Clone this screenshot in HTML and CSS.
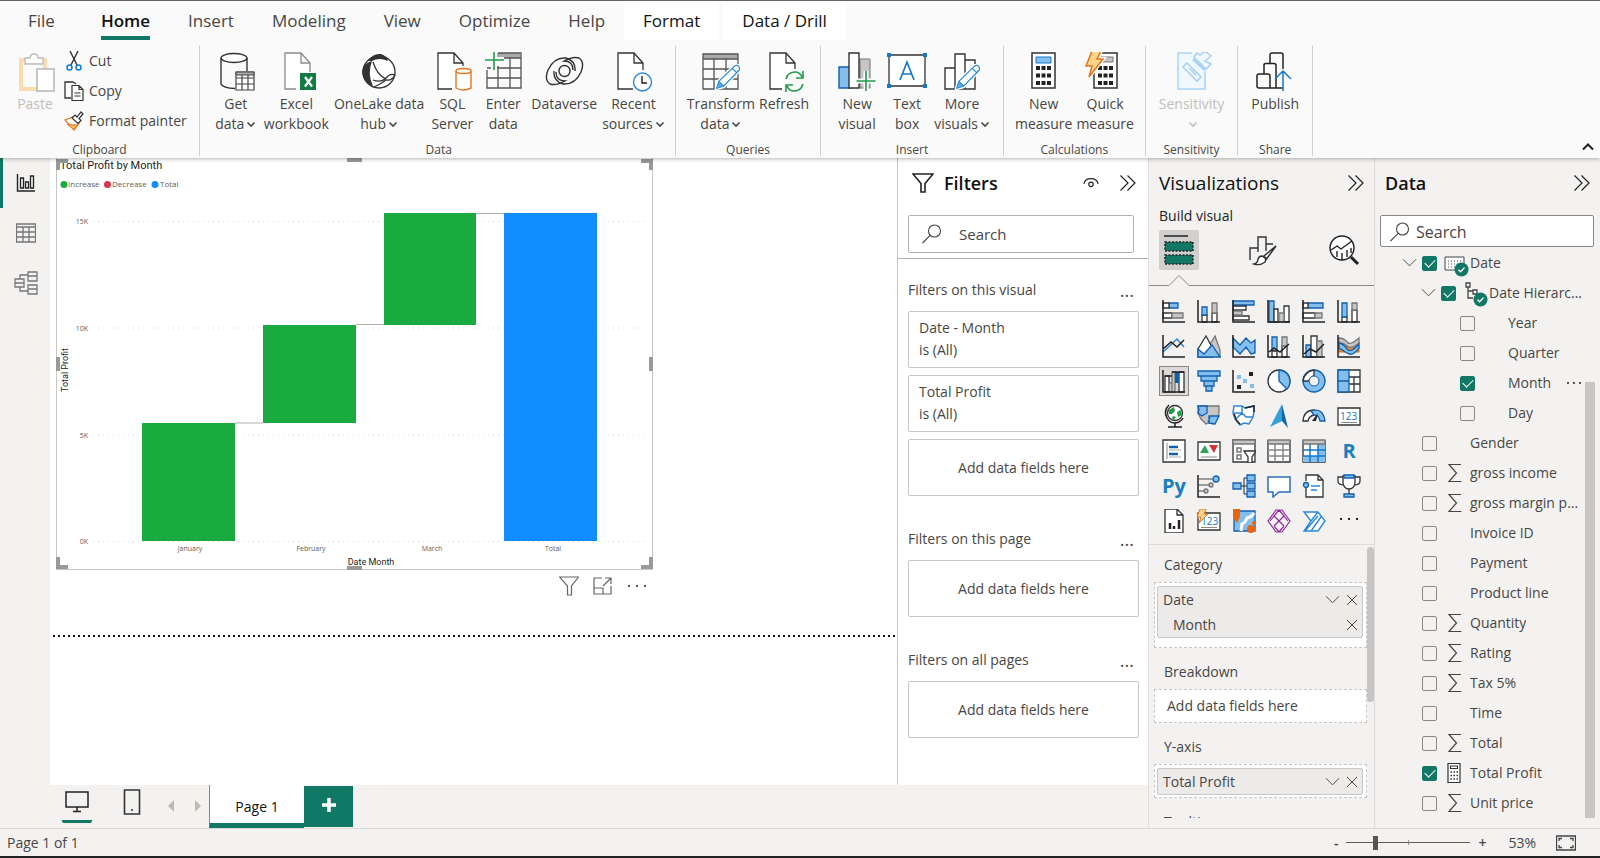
FILE: index.html
```html
<!DOCTYPE html>
<html lang="en">
<head>
    <meta charset="UTF-8">
    <meta name="viewport" content="width=device-width, initial-scale=1.0">
    <title>Report - Total Profit by Month</title>
    <link rel="stylesheet" href="styles.css">
</head>
<body>
    <!-- shared icons -->
    <svg class="sprite" aria-hidden="true">
        <symbol id="i-down" viewBox="0 0 10 10"><path d="M1.5 3.5L5 7l3.500-3.500" fill="none" stroke="currentColor" stroke-width="1.6"/></symbol>
        <symbol id="i-chev" viewBox="0 0 16 10"><path d="M1 1l7 7 7-7" fill="none" stroke="currentColor"/></symbol>
        <symbol id="i-close" viewBox="0 0 12 12"><path d="M1 1l10 10M11 1L1 11" fill="none" stroke="currentColor"/></symbol>
        <symbol id="i-collapse" viewBox="0 0 18 16"><path d="M1.500 0.500L9 8l-7.500 7.500M8.500 0.500L16 8l-7.500 7.500" fill="none" stroke="currentColor" stroke-width="1.2"/></symbol>
        <symbol id="i-search" viewBox="0 0 20 20"><circle cx="12.500" cy="7" r="6" fill="none" stroke="currentColor" stroke-width="1.1"/><path d="M8.200 11.300L0.500 19" fill="none" stroke="currentColor" stroke-width="1.1"/></symbol>
        <symbol id="i-sum" viewBox="0 0 20 20"><path d="M16 1.500H4L11.500 10 4 18.500h12.500" fill="none" stroke="currentColor" stroke-width="1.2"/></symbol>
        <symbol id="i-pencil" viewBox="0 0 28 28"><path d="M3 25l2-7L21 2.500q2.500-2 4.500 0t0 4.500L10 23z" fill="#fff" stroke="#fff" stroke-width="4"/><path d="M5 18L21 2.500q2.500-2 4.500 0t0 4.500L10 23zM19 4.500L23.500 9" fill="#fff" stroke="#2b88d8" stroke-width="1.300"/><path d="M5 18l-2.500 7.500L10 23z" fill="#5ba7e6" stroke="#2b88d8"/></symbol>
        <symbol id="i-done" viewBox="0 0 16 16"><circle cx="8" cy="8" r="7.500" fill="#117865"/><path d="M4.800 8.200l2.200 2.200 4.200-4.400" fill="none" stroke="#fff" stroke-width="1.500"/></symbol>
    </svg>

    <header class="ribbon">
        <nav class="tabs">
            <button class="file">File</button>
            <button class="active">Home</button>
            <button>Insert</button>
            <button>Modeling</button>
            <button>View</button>
            <button>Optimize</button>
            <button>Help</button>
            <button class="context">Format</button>
            <button class="context">Data / Drill</button>
        </nav>

        <div class="groups">
            <section class="group clipboard">
                <div class="items">
                    <button class="cmd" disabled>
                        <svg class="icon" viewBox="0 0 40 40"><path d="M6 8h24v29H6z" fill="#fafafa" stroke="#fbdcb0" stroke-width="4"/><path d="M10 12V6h5q0-4 4-4t4 4h5v6z" fill="#fff" stroke="#bbb" stroke-width="1.300"/><path d="M22 17h17v22H22z" fill="#fff" stroke="#b5b5b5" stroke-width="1.500"/></svg>
                        <span>Paste</span>
                    </button>
                    <div class="small-list">
                        <button class="small-cmd">
                            <svg viewBox="0 0 20 20"><path d="M6 0l7 14M14 0L7 14" fill="none" stroke="#333" stroke-width="1.400"/><circle cx="5.500" cy="16.500" r="2.500" fill="none" stroke="#1478c8" stroke-width="1.500"/><circle cx="14.500" cy="16.500" r="2.500" fill="none" stroke="#1478c8" stroke-width="1.500"/></svg>
                            Cut
                        </button>
                        <button class="small-cmd">
                            <svg viewBox="0 0 20 20"><path d="M7 17H1V1h8l3 2" fill="none" stroke="#333" stroke-width="1.300"/><path d="M8 4.500h7l4 4v11H8zM15 4.500v4h4M10.500 12h6M10.500 15h6" fill="#fff" stroke="#333" stroke-width="1.200"/></svg>
                            Copy
                        </button>
                        <button class="small-cmd">
                            <svg viewBox="0 0 20 20"><path d="M1 9l8-3 6 6-5 7z" fill="#fff" stroke="#e3761c" stroke-width="1.300"/><path d="M3.500 13.500l9.500.5-3 4.500z" fill="#f5b96c" stroke="#e3761c"/><path d="M8 7l3-3 2 2 4-5 2 2-4 4.500 2 2-3 3z" fill="#fff" stroke="#333" stroke-width="1.200"/></svg>
                            Format painter
                        </button>
                    </div>
                </div>
                <h2>Clipboard</h2>
            </section>

            <section class="group wide">
                <div class="items">
                    <button class="cmd">
                        <svg class="icon" viewBox="0 0 40 40"><path d="M5 6v26q2 4 14 4.500M31 6v13" fill="none" stroke="#333" stroke-width="1.400"/><ellipse cx="18" cy="6" rx="13" ry="4.500" fill="#fff" stroke="#333" stroke-width="1.400"/><path d="M20 20h18v18H20zM20 26h18M20 32h18M26 23v15M32 23v15" fill="#fff" stroke="#444" stroke-width="1.200"/><path d="M20 20h18v3H20z" fill="#aaa" stroke="#444"/></svg>
                        <span>Get<br>data<svg class="down"><use href="#i-down"/></svg></span>
                    </button>
                    <button class="cmd">
                        <svg class="icon" viewBox="0 0 40 40"><path d="M20 37H9V1h16l9 10v9M25 1v10h9" fill="#fff" stroke="#8a8a8a" stroke-width="1.300"/><path d="M24 21h16v17H24z" fill="#107c41"/><path d="M29 25l7 9.500M36 25l-7 9.500" stroke="#fff" stroke-width="2.200"/></svg>
                        <span>Excel<br>workbook</span>
                    </button>
                    <button class="cmd">
                        <svg class="icon" viewBox="0 0 40 40"><circle cx="20" cy="20" r="16" fill="#fff" stroke="#333" stroke-width="1.300"/><path d="M9 9q5-8 13-7 6 2 7 7-9-4-16 0z" fill="#333"/><path d="M13 9q-5 13 1 25Q4 31 3 20 4 11 13 9z" fill="#333"/><path d="M14 10q4 13 13 17M14 28q8 3 13-2 4-5 9-3-3 6-9 5-7 5-12 7" fill="none" stroke="#333" stroke-width="1.300"/></svg>
                        <span>OneLake data<br>hub<svg class="down"><use href="#i-down"/></svg></span>
                    </button>
                    <button class="cmd">
                        <svg class="icon" viewBox="0 0 40 40"><path d="M20 37H6V1h16l9 10v3M22 1v10h9" fill="#fff" stroke="#333" stroke-width="1.300"/><path d="M24 19v17q7 4 15 0V19" fill="#fff" stroke="#e3761c" stroke-width="1.400"/><ellipse cx="31.500" cy="19" rx="7.500" ry="2.500" fill="#fff" stroke="#e3761c" stroke-width="1.400"/></svg>
                        <span>SQL<br>Server</span>
                    </button>
                    <button class="cmd">
                        <svg class="icon" viewBox="0 0 40 40"><path d="M14 1h23v5H14z" fill="#aaa"/><path d="M4 18v18h34V1H15M20 6h18M4 16h34M4 26h34M15 14v22M27 6v30" fill="none" stroke="#555" stroke-width="1.300"/><path d="M11 0v17M2 8h19" stroke="#fafafa" stroke-width="6"/><path d="M11-1v19M2 8h19" stroke="#209a4b" stroke-width="1.600"/></svg>
                        <span>Enter<br>data</span>
                    </button>
                    <button class="cmd">
                        <svg class="icon" viewBox="0 0 40 40"><g fill="none" stroke="#333" stroke-width="1.400"><path id="arm" d="M12 20Q12 29 21 29 12 34 6 32 0 28 4 18 10 5 22 6 32 9 31 19"/><use href="#arm" transform="rotate(180 20.500 19)"/><circle cx="20.500" cy="19" r="5.500"/></g></svg>
                        <span>Dataverse</span>
                    </button>
                    <button class="cmd">
                        <svg class="icon" viewBox="0 0 40 40"><path d="M20 37H5V1h16l9 10v7M21 1v10h9" fill="#fff" stroke="#333" stroke-width="1.300"/><circle cx="29.500" cy="30" r="9" fill="#fff" stroke="#2b88d8" stroke-width="1.400"/><path d="M29 24v7h5" fill="none" stroke="#222" stroke-width="1.400"/></svg>
                        <span>Recent<br>sources<svg class="down"><use href="#i-down"/></svg></span>
                    </button>
                </div>
                <h2>Data</h2>
            </section>

            <section class="group tight">
                <div class="items">
                    <button class="cmd">
                        <svg class="icon" viewBox="0 0 40 40"><path d="M2 2h35v5H2z" fill="#aaa"/><path d="M2 2h35v35H2zM2 7h35M2 17h35M2 27h35M13 7v30M25 7v30" fill="none" stroke="#555" stroke-width="1.300"/><use href="#i-pencil" x="13" y="12" width="27" height="27"/></svg>
                        <span>Transform<br>data<svg class="down"><use href="#i-down"/></svg></span>
                    </button>
                    <button class="cmd">
                        <svg class="icon" viewBox="0 0 40 40"><path d="M18 37H6V1h16l9 10v6M22 1v10h9" fill="#fff" stroke="#333" stroke-width="1.300"/><path d="M22 27q2-7 9-7 5 0 7 5M39 19v7h-7M39 32q-2 7-9 7-5 0-7-5M22 40v-7h7" fill="none" stroke="#209a4b" stroke-width="1.600"/></svg>
                        <span>Refresh</span>
                    </button>
                </div>
                <h2>Queries</h2>
            </section>

            <section class="group">
                <div class="items">
                    <button class="cmd">
                        <svg class="icon" viewBox="0 0 40 40"><path d="M23 7h10v29H23z" fill="#c8c6c4" stroke="#777"/><path d="M2 15h11v21H2z" fill="#83beec" stroke="#1060b0" stroke-width="1.400"/><path d="M12 1h10v35H12z" fill="#fff" stroke="#333" stroke-width="1.400"/><path d="M29 19v20M20 29h18" stroke="#fafafa" stroke-width="5"/><path d="M29 19v20M19.500 29h19" stroke="#209a4b" stroke-width="1.600"/></svg>
                        <span>New<br>visual</span>
                    </button>
                    <button class="cmd">
                        <svg class="icon" viewBox="0 0 40 40"><path d="M2 3h36v31H2z" fill="#fff" stroke="#333" stroke-width="1.300"/><path d="M0 1h4v4H0zM36 1h4v4h-4zM0 32h4v4H0zM36 32h4v4h-4z" fill="#1478c8"/><path d="M13 28l7-18 7 18M15.500 22h9" fill="none" stroke="#1478c8" stroke-width="1.700"/></svg>
                        <span>Text<br>box</span>
                    </button>
                    <button class="cmd">
                        <svg class="icon" viewBox="0 0 40 40"><path d="M3 16h10v21H3zM23 8h10v29H23zM13 2h10v35H13z" fill="#fff" stroke="#333" stroke-width="1.400"/><use href="#i-pencil" x="12" y="12" width="27" height="27"/></svg>
                        <span>More<br>visuals<svg class="down"><use href="#i-down"/></svg></span>
                    </button>
                </div>
                <h2>Insert</h2>
            </section>

            <section class="group tight">
                <div class="items">
                    <button class="cmd">
                        <svg class="icon" viewBox="0 0 40 40"><path d="M8 1h23v35H8z" fill="#fff" stroke="#333" stroke-width="1.500"/><path d="M12 5h15v6H12z" fill="#83beec" stroke="#1478c8"/><path d="M12 16h15M12 23.500h15M12 31h15" stroke="#222" stroke-width="4" stroke-dasharray="4 1.500"/></svg>
                        <span>New<br>measure</span>
                    </button>
                    <button class="cmd">
                        <svg class="icon" viewBox="0 0 40 40"><path d="M9 1h23v35H9z" fill="#fff" stroke="#333" stroke-width="1.500"/><path d="M13 5h15v5H13z" fill="#c8c6c4" stroke="#777"/><path d="M13 16h15M13 23.500h15M13 31h15" stroke="#222" stroke-width="4" stroke-dasharray="4 1.500"/><path d="M7-1h9l-4 8h6L4 25l3-11H1z" fill="#ffd58a" stroke="#fafafa" stroke-width="4"/><path d="M7-1h9l-4 8h6L4 25l3-11H1z" fill="#ffd58a" stroke="#e3761c" stroke-width="1.500"/></svg>
                        <span>Quick<br>measure</span>
                    </button>
                </div>
                <h2>Calculations</h2>
            </section>

            <section class="group">
                <div class="items">
                    <button class="cmd" disabled>
                        <svg class="icon" viewBox="0 0 40 40"><path d="M20 1H6v36h27V19" fill="#f1f8fd" stroke="#a9d3f2" stroke-width="1.500"/><path d="M15 11l14 14-4 4-14-14zM17 16l7 7M22 5l12 12 5-5-6-3 6-5-6-5-5 4-3-2z" fill="#f1f8fd" stroke="#a9d3f2" stroke-width="1.600"/><path d="M21 7l12 11" stroke="#a9d3f2" stroke-width="3"/></svg>
                        <span>Sensitivity<br><svg class="down"><use href="#i-down"/></svg></span>
                    </button>
                </div>
                <h2>Sensitivity</h2>
            </section>

            <section class="group">
                <div class="items">
                    <button class="cmd">
                        <svg class="icon" viewBox="0 0 40 40"><path d="M28 36H4q-2 0-2-2V24q0-2 2-2h9q2 0 2 2v12M9 22V13q0-1.500 2-1.500h8q2 0 2 2V36M15 11V3q0-2 2-2h9q2 0 2 2v14" fill="none" stroke="#222" stroke-width="1.500"/><path d="M28 39V20M20 27l8-8 8 8" fill="none" stroke="#1478c8" stroke-width="1.500"/></svg>
                        <span>Publish</span>
                    </button>
                </div>
                <h2>Share</h2>
            </section>

            <button class="fold" aria-label="Collapse ribbon"><svg viewBox="0 0 12 8"><path d="M1 6.500l5-5 5 5" fill="none" stroke="#222" stroke-width="2"/></svg></button>
        </div>
    </header>

    <main class="workspace">
        <div class="report">
            <div class="report-body">
                <nav class="views">
                    <button class="active" aria-label="Report view"><svg viewBox="0 0 20 20"><path d="M1.500 1v17H19" fill="none" stroke="#222" stroke-width="1.400"/><path d="M4.500 5h3v10h-3zM9.500 9h3v6h-3zM14.500 3h3v12h-3z" fill="none" stroke="#222" stroke-width="1.300"/></svg></button>
                    <button aria-label="Table view"><svg viewBox="0 0 20 20"><path d="M.5 1h19v18H.5zM.5 4h19M.5 9h19M.5 14h19M7 4v15M13 4v15" fill="none" stroke="#777" stroke-width="1.300"/></svg></button>
                    <button aria-label="Model view"><svg class="large" viewBox="0 0 24 24"><path d="M1 8h9v8H1zM1 12h9M14 1h9v9h-9zM14 5h9M14 14h9v9h-9zM14 18h9M6 8V4h8M6 16v4h8" fill="none" stroke="#777" stroke-width="1.300"/></svg></button>
                </nav>

                <section class="canvas">
                    <svg class="chart" viewBox="0 0 598 412" role="img" aria-label="Total Profit by Month">
                        <path class="frame" d="M.5 0v411.500h596V0"/>
                        <text class="title" x="4" y="11">Total Profit by Month</text>
                        <circle cx="8" cy="26.500" r="3.500" fill="#1aab40"/><text class="legend" x="12" y="29">Increase</text>
                        <circle cx="51.500" cy="26.500" r="3.500" fill="#d9374c"/><text class="legend" x="56" y="29">Decrease</text>
                        <circle cx="99" cy="26.500" r="3.500" fill="#118dff"/><text class="legend" x="104" y="29">Total</text>
                        <path class="lines" d="M37 63.500h554M37 170h554M37 277h554M37 383.500h554"/>
                        <g class="tick end">
                            <text x="32" y="66">15K</text>
                            <text x="32" y="173">10K</text>
                            <text x="32" y="280">5K</text>
                            <text x="32" y="386">0K</text>
                        </g>
                        <path class="link" d="M179 265h28M300 166.500h28M420 55.500h28"/>
                        <path fill="#1aab40" d="M86 265h93v118H86zM207 167h93v98h-93zM328 55h92v112h-92z"/>
                        <path fill="#118dff" d="M448 55h93v328h-93z"/>
                        <g class="tick mid">
                            <text x="134" y="393">January</text>
                            <text x="255" y="393">February</text>
                            <text x="376" y="393">March</text>
                            <text x="497" y="393">Total</text>
                        </g>
                        <text class="axis" x="315" y="407">Date Month</text>
                        <text class="axis" transform="translate(12 212) rotate(-90)">Total Profit</text>
                        <path class="handle" d="M0 1h12v4H4v7H0zM597 1h-12v4h8v7h4zM0 411h12v-4H4v-8H0zM597 411h-12v-4h8v-8h4zM291 0h15v4h-15zM291 408h15v4h-15zM0 199h4v14H0zM593 199h4v14h-4z"/>
                    </svg>
                    <div class="visual-actions">
                        <button aria-label="Filters"><svg viewBox="0 0 20 20"><path d="M.5 1h19l-7 9v9h-4v-9z" fill="none" stroke="#666" stroke-width="1.200"/></svg></button>
                        <button aria-label="Focus mode"><svg viewBox="0 0 20 20"><path d="M9 2H1v16h17v-8M1 12h9v6M12 2h6v6M18 2l-8 8" fill="none" stroke="#666" stroke-width="1.200"/></svg></button>
                        <button aria-label="More options"><svg viewBox="0 0 20 20"><path d="M1 9h2v2H1zM9 9h2v2H9zM17 9h2v2h-2z" fill="#555"/></svg></button>
                    </div>
                    <div class="page-edge"></div>
                </section>

                <aside class="filters">
                    <header class="pane-head">
                        <svg class="funnel" viewBox="0 0 22 20"><path d="M1 1h20l-8 9.500V19H9v-8.500z" fill="none" stroke="#222" stroke-width="1.600"/></svg>
                        <h1>Filters</h1>
                        <button aria-label="Show filter pane"><svg class="eye" viewBox="0 0 18 12"><path d="M1 7q1-6 8-6t8 6" fill="none" stroke="#222" stroke-width="1.300"/><circle cx="9" cy="7.500" r="2.500" fill="none" stroke="#222" stroke-width="1.300"/></svg></button>
                        <button aria-label="Collapse"><svg class="collapse"><use href="#i-collapse"/></svg></button>
                    </header>
                    <label class="search"><svg><use href="#i-search"/></svg><input type="text" placeholder="Search" aria-label="Search filters"></label>
                    <div class="filter-group">
                        <h2>Filters on this visual <button aria-label="More">...</button></h2>
                        <div class="card">Date - Month<br>is (All)</div>
                        <div class="card">Total Profit<br>is (All)</div>
                        <div class="card drop">Add data fields here</div>
                    </div>
                    <div class="filter-group">
                        <h2>Filters on this page <button aria-label="More">...</button></h2>
                        <div class="card drop">Add data fields here</div>
                    </div>
                    <div class="filter-group">
                        <h2>Filters on all pages <button aria-label="More">...</button></h2>
                        <div class="card drop">Add data fields here</div>
                    </div>
                </aside>
            </div>

            <footer class="pages">
                <button class="device active" aria-label="Desktop layout"><svg viewBox="0 0 24 24"><path d="M1 2h22v15H1zM12 17v4M8 21.500h8" fill="none" stroke="#222" stroke-width="1.500"/></svg></button>
                <button class="device" aria-label="Mobile layout"><svg viewBox="0 0 24 26"><path d="M4.500 1h15v24h-15z" fill="none" stroke="#333" stroke-width="1.600"/><path d="M11 21h2" stroke="#333" stroke-width="1.500"/></svg></button>
                <button class="step" aria-label="Previous page"><svg viewBox="0 0 6 12"><path d="M6 0v12L0 6z" fill="#bdbbb9"/></svg></button>
                <button class="step" aria-label="Next page"><svg viewBox="0 0 6 12"><path d="M0 0v12l6-6z" fill="#bdbbb9"/></svg></button>
                <button class="page-tab">Page 1</button>
                <button class="add" aria-label="New page"><svg viewBox="0 0 14 14"><path d="M7 0v14M0 7h14" stroke="#fff" stroke-width="3.500"/></svg></button>
            </footer>
        </div>

        <aside class="viz">
            <header class="pane-head">
                <h1>Visualizations</h1>
                <button aria-label="Collapse"><svg class="collapse"><use href="#i-collapse"/></svg></button>
            </header>
            <h2 class="sub">Build visual</h2>
            <div class="viz-tabs">
                <button class="active" aria-label="Build visual"><svg viewBox="0 0 32 32"><path d="M1 2h24" stroke="#222" stroke-width="1.500"/><path d="M2 8h28v9H2zM2 21h28v9H2z" fill="#117865" stroke="#222" stroke-width="1.500" stroke-dasharray="2 1.500"/></svg></button>
                <button aria-label="Format visual"><svg viewBox="0 0 32 32"><path d="M4 26V14h8M12 18V3h8v14M20 10h7" fill="none" stroke="#333" stroke-width="1.400"/><path d="M30 12L18 22l2.500 3z" fill="#fff" stroke="#333" stroke-width="1.500"/><path d="M16 22q5 2 3 6-5 4-11 2 4-1 4-5 1-3 4-3z" fill="#fff" stroke="#333" stroke-width="1.400"/></svg></button>
                <button aria-label="Analytics"><svg viewBox="0 0 32 32"><circle cx="14" cy="14" r="12" fill="#fff" stroke="#222" stroke-width="1.500"/><path d="M3 16l6-4 4 3 11-8M9 17v6M14 19v7M19 16v7M23 14v5" fill="none" stroke="#222" stroke-width="1.400"/><path d="M23 23l7 7" stroke="#222" stroke-width="3"/></svg></button>
            </div>
            <div class="notch"><svg viewBox="0 0 60 16"><path d="M0 15.500h20l10-10 10 10h20" fill="none" stroke="#8a8886"/></svg></div>

            <div class="gallery">
                <button aria-label="Stacked bar chart"><svg viewBox="0 0 24 24"><path class="b" d="M7 4h9v5H7z"/><path class="w" d="M1 4h6v5H1zM1 14h9v5H1z"/><path class="g" d="M10 14h11v5H10z"/><path class="k" d="M1 1v22h22"/></svg></button>
                <button aria-label="Stacked column chart"><svg viewBox="0 0 24 24"><path class="w" d="M5 16h5v7H5zM15 14h5v9h-5z"/><path class="b" d="M5 8h5v8H5z"/><path class="g" d="M15 4h5v10h-5z"/><path class="k" d="M1 1v22h22"/></svg></button>
                <button aria-label="Clustered bar chart"><svg viewBox="0 0 24 24"><path class="b" d="M1 2h21v4H1z"/><path class="w" d="M1 7h13v4H1zM1 17h16v4H1z"/><path class="g" d="M1 12h9v4H1z"/><path class="k" d="M1 1v22h22"/></svg></button>
                <button aria-label="Clustered column chart"><svg viewBox="0 0 24 24"><path class="b" d="M2 2h5v21H2z"/><path class="w" d="M7 10h4v13H7zM17 7h5v16h-5z"/><path class="g" d="M12 14h5v9h-5z"/><path class="k" d="M1 1v22h22"/></svg></button>
                <button aria-label="100% stacked bar chart"><svg viewBox="0 0 24 24"><path class="b" d="M6 4h15v5H6z"/><path class="w" d="M1 4h5v5H1zM1 14h12v5H1z"/><path class="g" d="M13 14h7v5h-7z"/><path class="k" d="M1 1v22h22"/></svg></button>
                <button aria-label="100% stacked column chart"><svg viewBox="0 0 24 24"><path class="w" d="M5 18h5v5H5zM15 11h5v12h-5z"/><path class="b" d="M5 4h5v14H5z"/><path class="g" d="M15 4h5v7h-5z"/><path class="k" d="M1 1v22h22"/></svg></button>

                <button aria-label="Line chart"><svg viewBox="0 0 24 24"><path d="M1 18L15 5l7 8" fill="none" stroke="#2b88d8" stroke-width="1.500"/><path class="k" d="M1 15l8-7 6 5 7-7M1 1v22h22"/></svg></button>
                <button aria-label="Area chart"><svg viewBox="0 0 24 24"><path class="g" d="M12 12l6-10 5 14v7z"/><path class="w" d="M1 15l8-13 7 13v8H1z"/><path class="b" d="M1 15l6 5 8-9 8 12H1z"/></svg></button>
                <button aria-label="Stacked area chart"><svg viewBox="0 0 24 24"><path class="b" d="M1 4l7 7 6-7 5 5 4-3v13l-4 1-5-7-6 7-7-7z"/><path class="k" d="M1 1v22h22"/></svg></button>
                <button aria-label="Line and stacked column chart"><svg viewBox="0 0 24 24"><path class="b" d="M5 3h5v14H5z"/><path class="w" d="M5 17h5v6H5zM15 12h5v11h-5z"/><path class="g" d="M15 3h5v9h-5z"/><path class="k" d="M1 1v22h22M2 18l5-4 6 4 9-8"/></svg></button>
                <button aria-label="Line and clustered column chart"><svg viewBox="0 0 24 24"><path class="b" d="M4 11h5v12H4z"/><path class="w" d="M9 2h6v21H9z"/><path class="g" d="M15 7h5v16h-5z"/><path class="k" d="M1 1v22h22M2 20l6-5 6 3 8-8"/></svg></button>
                <button aria-label="Ribbon chart"><svg viewBox="0 0 24 24"><path d="M2 12h20v6H2z" fill="#f58220" stroke="#d66a10"/><path class="g" d="M2 4q5 0 8 4t12-4v5q-8 7-12 3t-8-3z"/><path class="b" d="M2 9q5 1 8 6t12-5v4q-6 9-12 5t-8-5z"/><path class="k" d="M1 1v22h22"/></svg></button>

                <button class="active" aria-label="Waterfall chart"><svg viewBox="0 0 24 24"><path class="w" d="M3 7h4v16H3zM17 3h5v20h-5z"/><path class="g" d="M7 14h3v9H7zM10 3h3v20h-3z"/><path d="M13 3h4v11h-4z" fill="#1060b0"/><path class="k" d="M1 1v22h22M3 7h7M10 3h12"/></svg></button>
                <button aria-label="Funnel chart"><svg viewBox="0 0 24 24"><path class="b" d="M1 2h22v5H1zM4 7h16v5H4zM7 12h10v5H7zM9 17h6v5H9z"/></svg></button>
                <button aria-label="Scatter chart"><svg viewBox="0 0 24 24"><path d="M5 6h4v4H5zM11 10h4v4h-4zM18 15h4v4h-4z" fill="#83beec"/><path d="M17 3h4v4h-4zM5 16h4v4H5z" fill="#222"/><path class="k" d="M1 1v22h22"/></svg></button>
                <button aria-label="Pie chart"><svg viewBox="0 0 24 24"><circle class="w" cx="12" cy="12" r="11"/><path class="b" d="M12 1v11l8 8q3-3 3-8Q22 2 12 1z"/></svg></button>
                <button aria-label="Donut chart"><svg viewBox="0 0 24 24"><circle class="b" cx="12" cy="12" r="11"/><path class="w" d="M12 1v6q-4 1-5 5H1Q2 3 12 1z"/><circle cx="12" cy="12" r="5" fill="#f3f2f1" stroke="#1060b0"/></svg></button>
                <button aria-label="Treemap"><svg viewBox="0 0 24 24"><path class="w" d="M1 1h22v22H1zM12 8h11M17 8v15M12 15h11"/><path class="b" d="M1 1h11v11H1zM1 12h11v11H1z"/></svg></button>

                <button aria-label="Map"><svg viewBox="0 0 24 24"><circle class="w" cx="13" cy="9" r="7.500"/><path d="M7 6l5-3 1 4-3 3-3 0zM15 8l4-2 1 5-4 2zM11 12l3 1-2 3-2-2z" fill="#209a4b"/><path class="k" d="M7 1Q1 7 5 14t12 4q3-2 4-4M13 19v4M6 23h14"/></svg></button>
                <button aria-label="Filled map"><svg viewBox="0 0 24 24"><path class="g" d="M1 2h21v6l-1 5-4 7-5-1-3 1-5-5-3-6z"/><path class="b" d="M1 2h9v7l-5 3-4-3 1-3zM12 12h10l-4 8-6-1zM11 18l2-5"/></svg></button>
                <button aria-label="Shape map"><svg viewBox="0 0 24 24"><path d="M2 2h8l3 2 9-2v6l-1 5-4 7-5-1-4 2-5-6-2-6zM10 2v7H2M10 9l4 4h7M10 9l-5 5" fill="#fff" stroke="#2b88d8" stroke-width="1.500"/><path d="M13 4l9-2v6M2 10l3 7 3 3" fill="none" stroke="#222" stroke-width="1.500"/></svg></button>
                <button aria-label="Azure map"><svg viewBox="0 0 24 24"><path d="M15 0L3 23l12-6z" fill="#35a0d8"/><path d="M15 0l6 24-6-7z" fill="#1565a8"/></svg></button>
                <button aria-label="Gauge"><svg viewBox="0 0 24 24"><path class="w" d="M1 17Q2 6 12 6v5q-5 1-6 6z"/><path class="b" d="M9 7q12-4 14 10h-5q-1-6-6-6z"/><path d="M16 9l-2 8h-4z" fill="#222"/></svg></button>
                <button aria-label="Card"><svg viewBox="0 0 24 24"><path class="w" d="M1 4h22v17H1z"/><text class="num" x="3" y="16">123</text><path d="M4 18.500h16" stroke="#888"/></svg></button>

                <button aria-label="Multi-row card"><svg viewBox="0 0 24 24"><path class="w" d="M1 1h22v22H1z"/><path d="M5 4v16" stroke="#888"/><path d="M7 8h9M7 15h9" stroke="#1060b0" stroke-width="2.500"/><path d="M7 11h12M7 18h12" stroke="#aaa"/></svg></button>
                <button aria-label="KPI"><svg viewBox="0 0 24 24"><path class="w" d="M1 3h22v18H1z"/><path d="M3 14l5-8 4 8z" fill="#2fa35a"/><path d="M12 6h9l-4 8z" fill="#d13438"/><path d="M4 18h16" stroke="#888"/></svg></button>
                <button aria-label="Slicer"><svg viewBox="0 0 24 24"><path class="w" d="M1 1h22v22H1z"/><path class="g" d="M1 1h22v4H1z"/><path d="M5 9h4v4H5zM5 16h4v4H5z" fill="none" stroke="#777" stroke-width="1.500"/><path class="w" d="M12 12h12l-4 6v6h-4v-6z"/></svg></button>
                <button aria-label="Table"><svg viewBox="0 0 24 24"><path class="w" d="M1 2h22v21H1z"/><path d="M1 11h22M1 17h22M8 5v18M16 5v18" stroke="#888" stroke-width="1.500"/><path class="g" d="M1 1h22v4H1z"/></svg></button>
                <button aria-label="Matrix"><svg viewBox="0 0 24 24"><path class="w" d="M1 2h22v21H1z"/><path d="M16 5h7v18H1v-6h15z" fill="#83beec"/><path d="M1 11h22M1 17h22M8 5v18M16 5v18" stroke="#1478c8" stroke-width="1.500"/><path class="g" d="M1 1h22v4H1z"/></svg></button>
                <button class="letter" aria-label="R script visual">R</button>

                <button class="letter" aria-label="Python visual">Py</button>
                <button aria-label="Key influencers"><svg viewBox="0 0 24 24"><path class="k" d="M1 1v22h22"/><path d="M1 5h15M1 11h11M1 17h7" stroke="#444"/><circle class="b" cx="19" cy="5" r="3"/><circle class="g" cx="14" cy="11" r="2"/><circle class="g" cx="9" cy="17" r="2"/></svg></button>
                <button aria-label="Decomposition tree"><svg viewBox="0 0 24 24"><path d="M9 12h6M12 4v16M12 4h4M12 20h4" fill="none" stroke="#222"/><path class="b" d="M1 9h8v6H1zM15 1h8v6h-8zM15 9h8v6h-8zM15 17h8v6h-8z"/></svg></button>
                <button aria-label="Q and A"><svg viewBox="0 0 24 24"><path d="M1 3h22v15H12l-6 5v-5H1z" fill="#fff" stroke="#2b6cb8" stroke-width="1.500"/></svg></button>
                <button aria-label="Narrative"><svg viewBox="0 0 24 24"><path class="w" d="M4 7V1h12l5 5v17H4V14M16 1v5h5"/><path d="M9 12h9M9 16h6" stroke="#2b88d8" stroke-width="1.500"/><circle class="b" cx="4" cy="11" r="2.500"/></svg></button>
                <button aria-label="Metrics"><svg viewBox="0 0 24 24"><path class="w" d="M6 3H1v4q0 4 6 4M18 3h5v4q0 4-6 4M6 2h12v7q-1 6-6 6t-6-6zM12 15v5"/><path class="b" d="M7 1h10v3H7zM7 20h10v3H7z"/></svg></button>

                <button aria-label="Paginated report"><svg viewBox="0 0 24 24"><path class="w" d="M3 0h12l6 6v18H3zM15 0v6h6"/><path d="M8 20v-6M12 20v-3M17 20v-9" stroke="#222" stroke-width="2.500"/></svg></button>
                <button aria-label="Card (new)"><svg viewBox="0 0 24 24"><path class="w" d="M1 4h22v17H1z"/><text class="num" x="4" y="16">123</text><path d="M4 18.500h16" stroke="#888"/><path d="M3 0h6L7 5h4L2 14l2-6H0z" fill="#ffd58a" stroke="#e3761c"/></svg></button>
                <button aria-label="ArcGIS map"><svg viewBox="0 0 24 24"><path class="b" d="M2 2h21v20H2z"/><path d="M22 4q-2 4-7 5-1 4-5 6l-1 7" fill="none" stroke="#fff" stroke-width="3"/><path d="M1 0h7v8l-3 6-4-6z" fill="#e8650a"/><circle cx="19" cy="20" r="4" fill="#e8650a"/><circle cx="22" cy="14" r="2" fill="#e8650a"/></svg></button>
                <button aria-label="Power Apps"><svg viewBox="0 0 24 24"><path d="M9 1h6l8 11-8 11H9L1 12zM12 1l5 6-10 10M12 1L7 7l10 10M12 23l5-6M12 23l-5-6M7 7l-4 5M17 7l4 5" fill="none" stroke="#8f2a9c" stroke-width="1.200"/></svg></button>
                <button aria-label="Power Automate"><svg viewBox="0 0 24 24"><path d="M2 3h14l7 9-7 10H2l7-10zM9 12l7-9M9 22l10-14M3 22L16 7" fill="#fff" stroke="#2b88d8" stroke-width="1.400"/></svg></button>
                <button aria-label="Get more visuals"><svg viewBox="0 0 24 24"><path d="M3 9h2v2H3zM11 9h2v2h-2zM19 9h2v2h-2z" fill="#222"/></svg></button>
            </div>

            <div class="wells">
                <div class="well-list">
                    <h3>Category</h3>
                    <div class="well tall">
                        <div class="pill">
                            <p>Date <button aria-label="Options"><svg class="chev"><use href="#i-chev"/></svg></button><button aria-label="Remove"><svg class="close"><use href="#i-close"/></svg></button></p>
                            <p class="nested">Month <button aria-label="Remove"><svg class="close"><use href="#i-close"/></svg></button></p>
                        </div>
                    </div>
                    <h3>Breakdown</h3>
                    <div class="well empty">Add data fields here</div>
                    <h3>Y-axis</h3>
                    <div class="well">
                        <div class="pill">
                            <p>Total Profit <button aria-label="Options"><svg class="chev"><use href="#i-chev"/></svg></button><button aria-label="Remove"><svg class="close"><use href="#i-close"/></svg></button></p>
                        </div>
                    </div>
                    <h3>Tooltips</h3>
                </div>
                <div class="thumb"></div>
            </div>
        </aside>

        <aside class="data">
            <header class="pane-head">
                <h1>Data</h1>
                <button aria-label="Collapse"><svg class="collapse"><use href="#i-collapse"/></svg></button>
            </header>
            <label class="search"><svg><use href="#i-search"/></svg><input type="text" placeholder="Search" aria-label="Search fields"></label>
            <div class="fields">
                <ul>
                    <li><label><svg class="chev"><use href="#i-chev"/></svg><input type="checkbox" checked><svg class="kind" viewBox="0 0 24 20"><path d="M2 4h19v13H2z" fill="#fff" stroke="#444"/><path d="M5 8h14M5 11h14M5 14h8" stroke="#444" stroke-dasharray="1 2"/><use href="#i-done" x="11" y="9" width="15" height="15"/></svg><span>Date</span></label></li>
                    <li class="l1"><label><svg class="chev"><use href="#i-chev"/></svg><input type="checkbox" checked><svg class="kind" viewBox="0 0 24 20"><path d="M4 0h4v4H4zM6 4v11h5M6 8h5M11 7h4v4h-4z" fill="none" stroke="#444" stroke-width="1.300"/><use href="#i-done" x="11" y="9" width="15" height="15"/></svg><span>Date Hierarchy</span></label></li>
                    <li class="l2"><label><i class="chev"></i><input type="checkbox"><i class="kind"></i><span>Year</span></label></li>
                    <li class="l2"><label><i class="chev"></i><input type="checkbox"><i class="kind"></i><span>Quarter</span></label></li>
                    <li class="l2"><label><i class="chev"></i><input type="checkbox" checked><i class="kind"></i><span>Month</span></label><button aria-label="More options"><svg viewBox="0 0 14 4"><path d="M0 1h2v2H0zM6 1h2v2H6zM12 1h2v2h-2z" fill="#555"/></svg></button></li>
                    <li class="l2"><label><i class="chev"></i><input type="checkbox"><i class="kind"></i><span>Day</span></label></li>
                    <li><label><i class="chev"></i><input type="checkbox"><i class="kind"></i><span>Gender</span></label></li>
                    <li><label><i class="chev"></i><input type="checkbox"><svg class="kind"><use href="#i-sum"/></svg><span>gross income</span></label></li>
                    <li><label><i class="chev"></i><input type="checkbox"><svg class="kind"><use href="#i-sum"/></svg><span>gross margin percentage</span></label></li>
                    <li><label><i class="chev"></i><input type="checkbox"><i class="kind"></i><span>Invoice ID</span></label></li>
                    <li><label><i class="chev"></i><input type="checkbox"><i class="kind"></i><span>Payment</span></label></li>
                    <li><label><i class="chev"></i><input type="checkbox"><i class="kind"></i><span>Product line</span></label></li>
                    <li><label><i class="chev"></i><input type="checkbox"><svg class="kind"><use href="#i-sum"/></svg><span>Quantity</span></label></li>
                    <li><label><i class="chev"></i><input type="checkbox"><svg class="kind"><use href="#i-sum"/></svg><span>Rating</span></label></li>
                    <li><label><i class="chev"></i><input type="checkbox"><svg class="kind"><use href="#i-sum"/></svg><span>Tax 5%</span></label></li>
                    <li><label><i class="chev"></i><input type="checkbox"><i class="kind"></i><span>Time</span></label></li>
                    <li><label><i class="chev"></i><input type="checkbox"><svg class="kind"><use href="#i-sum"/></svg><span>Total</span></label></li>
                    <li><label><i class="chev"></i><input type="checkbox" checked><svg class="kind" viewBox="0 0 20 20"><path d="M3 .5h12v19H3zM5.500 3h7v2.500h-7z" fill="#fff" stroke="#333" stroke-width="1.200"/><path d="M5.500 9h8M5.500 12.500h8M5.500 16h8" stroke="#333" stroke-width="1.500" stroke-dasharray="1.500 1.500"/></svg><span>Total Profit</span></label></li>
                    <li><label><i class="chev"></i><input type="checkbox"><svg class="kind"><use href="#i-sum"/></svg><span>Unit price</span></label></li>
                </ul>
                <div class="thumb"></div>
            </div>
        </aside>
    </main>

    <footer class="status">
        <span class="count">Page 1 of 1</span>
        <button aria-label="Zoom out">-</button>
        <input type="range" min="10" max="200" value="53" aria-label="Zoom">
        <button aria-label="Zoom in">+</button>
        <span class="percent">53%</span>
        <button aria-label="Fit to page"><svg viewBox="0 0 20 16"><path d="M.5 1h19v14H.5z" fill="none" stroke="#444" stroke-width="1.300"/><path d="M3 6V3.500h3M14 3.500h3V6M17 10v2.500h-3M6 12.500H3V10" fill="none" stroke="#444" stroke-width="1.300"/></svg></button>
    </footer>
</body>
</html>
```

FILE: styles.css
```css
* {
    margin: 0;
    padding: 0;
    box-sizing: border-box;
    font-family: 'Open Sans', 'Noto Sans', sans-serif;
}

body {
    display: flex;
    flex-direction: column;
    min-height: 100vh;
    background: #f3f2f1;
    color: #484644;
    font-size: 14px;
    line-height: 20px;
}

button {
    background: none;
    border: none;
    color: inherit;
    font-size: inherit;
    line-height: inherit;
    cursor: pointer;
}

svg {
    flex: none;
}

h1 {
    color: #111;
    font-size: 18px;
    font-weight: 600;
}

.sprite {
    position: absolute;
    width: 0;
    height: 0;
}

/* ribbon */
.ribbon {
    position: relative;
    background: #fafafa;
    border-top: 1px solid #666;
    box-shadow: 0 1px 4px rgba(0, 0, 0, 0.3);
}

.tabs {
    display: flex;
    padding: 1px 0 0 9px;
}

.tabs button {
    height: 38px;
    padding: 0 19px;
    font-size: 17px;
}

.tabs .file {
    margin-right: 8px;
}

.tabs .active {
    color: #111;
    font-weight: 600;
    background: linear-gradient(#117865, #117865) center bottom / calc(100% - 38px) 4px no-repeat;
}

.tabs .context {
    margin-right: 4px;
    background: #fff;
    color: #111;
    font-weight: 500;
}

.groups {
    display: flex;
    padding: 6px 0 2px;
}

.group {
    display: flex;
    flex-direction: column;
    height: 110px;
    padding: 0 11px;
    border-right: 1px solid #d2d0ce;
}

.items {
    display: flex;
    flex: 1;
}

.group h2 {
    font-size: 12px;
    font-weight: 400;
    line-height: 12px;
    text-align: center;
}

.cmd {
    display: flex;
    flex-direction: column;
    align-items: center;
    min-width: 50px;
    padding: 6px 2px 0;
}

.cmd:disabled {
    color: #c0bebc;
}

.cmd .icon {
    width: 40px;
    height: 40px;
    margin-bottom: 2px;
}

.down {
    width: 10px;
    height: 10px;
    margin-left: 2px;
}

.tight {
    padding: 0 9px;
}

.wide .items {
    gap: 1px;
}

.wide {
    padding: 0 8px 0 11px;
}

.clipboard {
    padding: 0 9px;
}

.clipboard .cmd {
    min-width: 52px;
}

.small-cmd {
    display: flex;
    align-items: center;
    gap: 5px;
    height: 30px;
    padding: 0 3px;
}

.small-cmd svg {
    width: 20px;
    height: 20px;
}

.fold {
    align-self: flex-end;
    margin: 0 6px 0 auto;
}

.fold svg {
    width: 12px;
    height: 8px;
}

/* workspace */
.workspace {
    display: flex;
    flex: 1;
}

.report {
    display: flex;
    flex: 1;
    flex-direction: column;
}

.report-body {
    display: flex;
    flex: 1;
}

.views {
    width: 50px;
}

.views button {
    display: flex;
    align-items: center;
    justify-content: center;
    width: 100%;
    height: 50px;
    padding-right: 2px;
    border-left: 3px solid transparent;
}

.views .active {
    border-color: #117865;
}

.views svg {
    width: 20px;
    height: 20px;
}

.views .large {
    width: 24px;
    height: 24px;
}

.canvas {
    flex: 1;
    background: #fff;
}

.chart {
    display: block;
    width: 598px;
    height: 412px;
    margin-left: 6px;
}

.chart .frame {
    fill: none;
    stroke: #c8c6c4;
}

.chart .title {
    font-family: Roboto, sans-serif;
    font-size: 11px;
    fill: #252423;
}

.chart .legend {
    font-size: 8px;
    fill: #605e5c;
}

.chart .tick text {
    font-size: 7px;
    fill: #605e5c;
}

.chart .end {
    text-anchor: end;
}

.chart .mid,
.chart .axis {
    text-anchor: middle;
}

.chart .axis {
    font-family: Roboto, sans-serif;
    font-size: 9px;
    fill: #252423;
}

.chart .lines {
    stroke: #dddbd9;
    stroke-dasharray: 1 4;
}

.chart .link {
    stroke: #b3b0ad;
}

.chart .handle {
    fill: #999;
}

.visual-actions {
    display: flex;
    gap: 14px;
    width: 602px;
    justify-content: flex-end;
    padding: 6px 5px 0 0;
}

.visual-actions svg {
    display: block;
    width: 20px;
    height: 20px;
}

.page-edge {
    height: 2px;
    margin: 39px 1px 0 3px;
    background: repeating-linear-gradient(90deg, #111 0, #111 2px, #fff 2px, #fff 5px);
}

/* panes */
.pane-head {
    display: flex;
    align-items: center;
    height: 48px;
    gap: 10px;
    padding: 2px 9px 0 10px;
}

.pane-head h1 {
    flex: 1;
}

.pane-head button {
    margin-left: 10px;
}

.pane-head svg {
    display: block;
}

.collapse {
    width: 18px;
    height: 16px;
    color: #222;
}

.eye {
    width: 16px;
    height: 12px;
}

.funnel {
    width: 22px;
    height: 20px;
}

.search {
    display: flex;
    align-items: center;
    background: #fff;
    border: 1px solid #8a8886;
    border-radius: 2px;
}

.search svg {
    width: 20px;
    height: 20px;
}

.search input {
    width: 100%;
    min-width: 0;
    border: none;
    outline: none;
    background: none;
    font-size: 16px;
}

.search input::placeholder {
    color: #484644;
}

.filters {
    width: 251px;
    background: #fff;
    border-left: 1px solid #c8c6c4;
}

.filters .pane-head {
    padding: 2px 11px 0 14px;
}

.filters .search {
    height: 38px;
    margin: 9px 14px 5px 10px;
    padding-left: 13px;
    gap: 17px;
    border-color: #b3b0ad;
}

.filters .search input {
    font-size: 15px;
}

.filter-group {
    padding: 22px 9px 4px 10px;
}

.search + .filter-group {
    border-top: 1px solid #b3b0ad;
    padding-top: 21px;
}

.filter-group h2 {
    display: flex;
    justify-content: space-between;
    margin-bottom: 11px;
    padding-right: 5px;
    font-size: 14px;
    font-weight: 400;
}

.filter-group h2 button {
    font-size: 18px;
}

.card {
    height: 57px;
    margin-bottom: 7px;
    padding: 5px 10px;
    border: 1px solid #c8c6c4;
    border-radius: 2px;
    line-height: 22px;
}

.drop {
    display: flex;
    align-items: center;
    justify-content: center;
}

/* page tabs */
.pages {
    display: flex;
    height: 43px;
    padding-left: 62px;
}

.device {
    width: 30px;
    height: 38px;
    margin-right: 25px;
    padding-top: 4px;
    border-bottom: 3px solid transparent;
}

.device.active {
    border-color: #117865;
    border-radius: 2px;
}

.device svg {
    width: 24px;
    height: 26px;
}

.step {
    width: 27px;
}

.step svg {
    width: 6px;
    height: 12px;
}

.pages .device + .step {
    margin-left: -15px;
}

.page-tab {
    width: 95px;
    margin-left: -2px;
    padding-top: 5px;
    background: #fff;
    border-left: 1px solid #8a8886;
    border-bottom: 5px solid #117865;
    color: #111;
    font-weight: 500;
}

.add {
    width: 49px;
    height: 41px;
    margin-top: 1px;
    background: #117865;
}

.add svg {
    width: 14px;
    height: 14px;
}

/* visualizations */
.viz {
    display: flex;
    flex-direction: column;
    width: 226px;
    border-left: 1px solid #e1dfdd;
}

.viz h1 {
    font-size: 19px;
    font-weight: 500;
}

.sub {
    padding-left: 10px;
    color: #222;
    font-size: 14px;
    font-weight: 500;
    line-height: 20px;
}

.viz-tabs {
    display: flex;
    justify-content: space-between;
    padding: 4px 10px 0;
}

.viz-tabs button {
    width: 40px;
    height: 40px;
    padding: 4px;
    border-radius: 2px;
}

.viz-tabs .active {
    background: #d2d0ce;
}

.viz-tabs svg {
    display: block;
    width: 32px;
    height: 32px;
}

.notch {
    display: flex;
}

.notch svg {
    width: 60px;
    height: 16px;
}

.notch::after {
    content: '';
    flex: 1;
    border-bottom: 1px solid #8a8886;
}

.gallery {
    display: grid;
    grid-template-columns: repeat(6, 30px);
    grid-auto-rows: 30px;
    gap: 5px;
    padding: 10px 0 8px 10px;
    border-bottom: 1px solid #dddbd9;
}

.gallery button {
    padding: 2px;
    border: 1px solid transparent;
}

.gallery .active {
    background: #dddbd9;
    border-color: #8a8886;
}

.gallery svg {
    display: block;
    width: 24px;
    height: 24px;
}

.gallery .k {
    fill: none;
    stroke: #222;
    stroke-width: 1.5;
}

.gallery .w {
    fill: #fff;
    stroke: #333;
    stroke-width: 1.3;
}

.gallery .b {
    fill: #83beec;
    stroke: #1060b0;
    stroke-width: 1.3;
}

.gallery .g {
    fill: #c8c6c4;
    stroke: #777;
    stroke-width: 1.3;
}

.gallery .num {
    font-size: 10px;
    fill: #1478c8;
}

.gallery .letter {
    padding: 0;
    color: #1a7fbf;
    font-size: 20px;
    font-weight: 700;
}

.wells {
    display: flex;
    flex: 1 1 0;
    min-height: 0;
    margin-bottom: 10px;
    overflow: hidden;
}

.well-list {
    flex: 1;
    padding: 10px 0 0 5px;
}

.well-list h3 {
    margin: 14px 0 7px;
    padding-left: 10px;
    font-size: 14px;
    font-weight: 400;
}

.well-list h3:first-child {
    margin-top: 0;
}

.well {
    height: 34px;
    padding: 3px 3px 3px 2px;
    background: #fff;
    border: 1px dashed #c8c6c4;
}

.well.tall {
    height: 66px;
}

.well.empty {
    padding: 6px 12px;
}

.pill {
    padding: 0 4px 0 5px;
    background: #edebe9;
    border: 1px solid #c8c6c4;
    border-radius: 2px;
}

.pill p {
    display: flex;
    align-items: center;
    gap: 6px;
    height: 25px;
}

.pill button:first-of-type {
    margin-left: auto;
}

.pill .nested {
    padding-left: 10px;
}

.pill svg {
    display: block;
}

.chev {
    width: 15px;
    height: 10px;
}

.close {
    width: 12px;
    height: 12px;
}

.wells .thumb {
    width: 7px;
    height: 155px;
    margin-top: 2px;
    background: #c8c6c4;
    border-radius: 4px;
}

/* data */
.data {
    display: flex;
    flex-direction: column;
    width: 226px;
    border-left: 1px solid #dddbd9;
}

.data .search {
    height: 32px;
    margin: 9px 6px 9px 5px;
    padding: 2px 0 0 9px;
    gap: 6px;
}

.fields {
    display: flex;
    flex: 1;
    margin-bottom: 10px;
    overflow: hidden;
}

.fields ul {
    flex: 1;
    min-width: 0;
    margin-top: -8px;
    list-style: none;
}

.fields li {
    display: flex;
    align-items: center;
    height: 30px;
    padding-left: 27px;
}

.fields .l1 {
    padding-left: 46px;
}

.fields .l2 {
    padding-left: 65px;
}

.fields label {
    display: flex;
    align-items: center;
    min-width: 0;
}

.fields input {
    position: relative;
    flex: none;
    width: 15px;
    height: 15px;
    margin: 0 6px 0 5px;
    appearance: none;
    border: 1px solid #8a8886;
    border-radius: 2px;
}

.fields input:checked {
    background: #117865;
    border-color: #117865;
}

.fields input:checked::after {
    content: '';
    position: absolute;
    left: 2px;
    top: 2px;
    width: 9px;
    height: 5px;
    border-left: 1px solid #fff;
    border-bottom: 1px solid #fff;
    transform: rotate(-45deg);
}

.kind {
    flex: none;
    width: 24px;
    height: 20px;
    margin-right: 3px;
    overflow: visible;
}

.fields .chev {
    flex: none;
}

.fields span {
    overflow: hidden;
    text-overflow: ellipsis;
    white-space: nowrap;
}

.fields li button {
    margin-left: auto;
    padding-right: 4px;
}

.fields li button svg {
    display: block;
    width: 14px;
    height: 4px;
}

.fields .thumb {
    width: 10px;
    margin: 126px 5px 0 0;
    background: #c8c6c4;
}

/* status bar */
.status {
    display: flex;
    align-items: center;
    height: 30px;
    padding: 0 24px 0 7px;
    border-top: 1px solid #dddbd9;
    border-bottom: 2px solid #222;
}

.count {
    margin-right: auto;
}

.status input {
    width: 124px;
    height: 14px;
    margin: 0 8px;
    appearance: none;
    background: linear-gradient(#605e5c, #605e5c) center / 100% 1px no-repeat,
        linear-gradient(#a19f9d, #a19f9d) center / 1px 5px no-repeat;
}

.status input::-webkit-slider-thumb {
    appearance: none;
    width: 5px;
    height: 14px;
    background: #555;
}

.status button {
    font-weight: 600;
}

.percent {
    margin: 0 20px 0 22px;
}

.status svg {
    display: block;
    width: 20px;
    height: 16px;
}
```
